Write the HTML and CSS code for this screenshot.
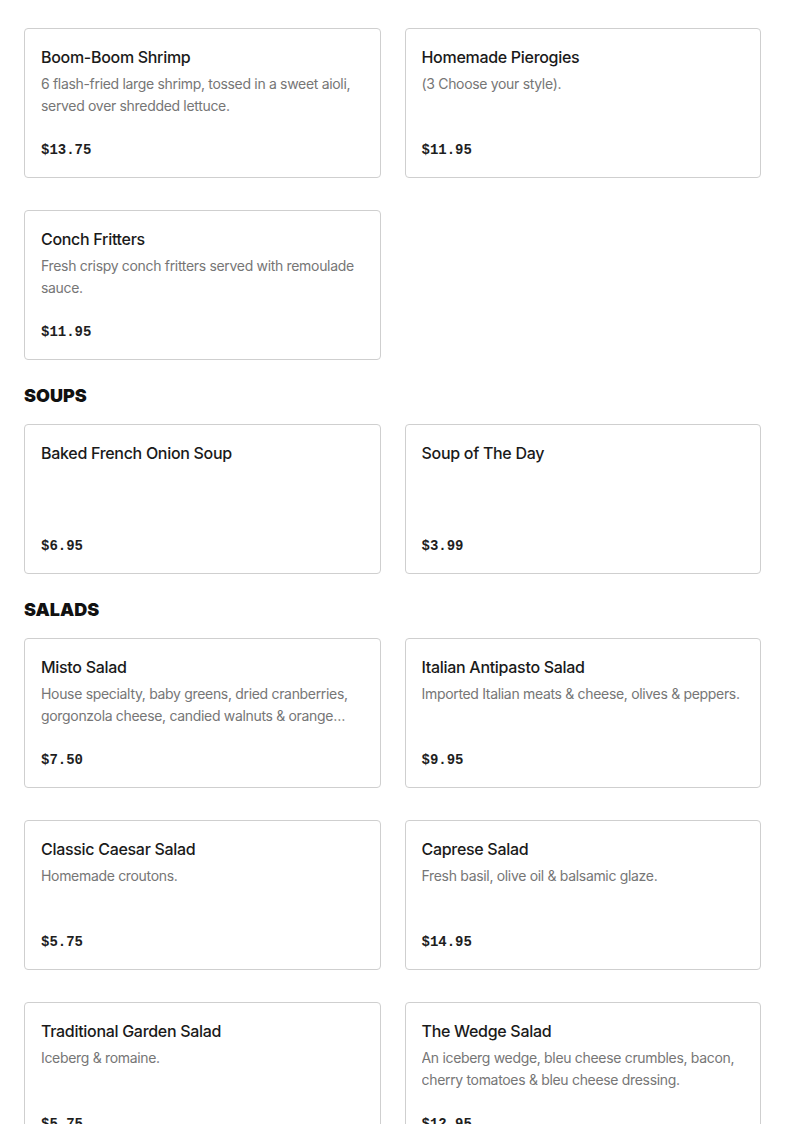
FILE: index.html
```html
<!DOCTYPE html>
<html>
<head>
<meta charset="utf-8">
<link rel="stylesheet" href="styles.css">
</head>
<body>
<div class="menu">
  <div class="grid">
    <div class="card"><div class="title">Boom-Boom Shrimp</div><div class="desc">6 flash-fried large shrimp, tossed in a sweet aioli, served over shredded lettuce.</div><div class="price">$13.75</div></div>
    <div class="card"><div class="title">Homemade Pierogies</div><div class="desc">(3 Choose your style).</div><div class="price">$11.95</div></div>
    <div class="card"><div class="title">Conch Fritters</div><div class="desc">Fresh crispy conch fritters served with remoulade sauce.</div><div class="price">$11.95</div></div>
  </div>
  <h2 class="section">SOUPS</h2>
  <div class="grid">
    <div class="card"><div class="title">Baked French Onion Soup</div><div class="desc"></div><div class="price">$6.95</div></div>
    <div class="card"><div class="title">Soup of The Day</div><div class="desc"></div><div class="price">$3.99</div></div>
  </div>
  <h2 class="section">SALADS</h2>
  <div class="grid">
    <div class="card"><div class="title">Misto Salad</div><div class="desc">House specialty, baby greens, dried cranberries, gorgonzola cheese, candied walnuts &amp; orange vinaigrette.</div><div class="price">$7.50</div></div>
    <div class="card"><div class="title">Italian Antipasto Salad</div><div class="desc">Imported Italian meats &amp; cheese, olives &amp; peppers.</div><div class="price">$9.95</div></div>
    <div class="card"><div class="title">Classic Caesar Salad</div><div class="desc">Homemade croutons.</div><div class="price">$5.75</div></div>
    <div class="card"><div class="title">Caprese Salad</div><div class="desc">Fresh basil, olive oil &amp; balsamic glaze.</div><div class="price">$14.95</div></div>
    <div class="card"><div class="title">Traditional Garden Salad</div><div class="desc">Iceberg &amp; romaine.</div><div class="price">$5.75</div></div>
    <div class="card"><div class="title">The Wedge Salad</div><div class="desc">An iceberg wedge, bleu cheese crumbles, bacon, cherry tomatoes &amp; bleu cheese dressing.</div><div class="price">$12.95</div></div>
  </div>
</div>
</body>
</html>
```

FILE: styles.css
```css
html, body {
  margin: 0;
  padding: 0;
  background: #fff;
}
.menu {
  padding: 28px 24px 0 24px;
  font-family: "Inter", "Liberation Sans", sans-serif;
}
.grid {
  display: grid;
  grid-template-columns: 1fr 1fr;
  column-gap: 24px;
  row-gap: 32px;
}
.card {
  box-sizing: border-box;
  height: 150px;
  border: 1px solid #cfcfcf;
  border-radius: 4px;
  padding: 16px;
  display: flex;
  flex-direction: column;
}
.title {
  font-size: 16px;
  line-height: 24px;
  font-weight: 500;
  letter-spacing: -0.3px;
  color: #1a1a1a;
}
.desc {
  margin-top: 4px;
  font-size: 14px;
  line-height: 22px;
  letter-spacing: -0.32px;
  color: #767676;
  display: -webkit-box;
  -webkit-line-clamp: 2;
  -webkit-box-orient: vertical;
  overflow: hidden;
}
.price {
  margin-top: auto;
  font-family: "Liberation Mono", monospace;
  font-weight: bold;
  font-size: 14px;
  line-height: 22px;
  color: #1e1e1e;
}
.section {
  margin: 24px 0 16px 0;
  font-size: 18px;
  line-height: 24px;
  font-weight: 900;
  color: #111;
}
```
